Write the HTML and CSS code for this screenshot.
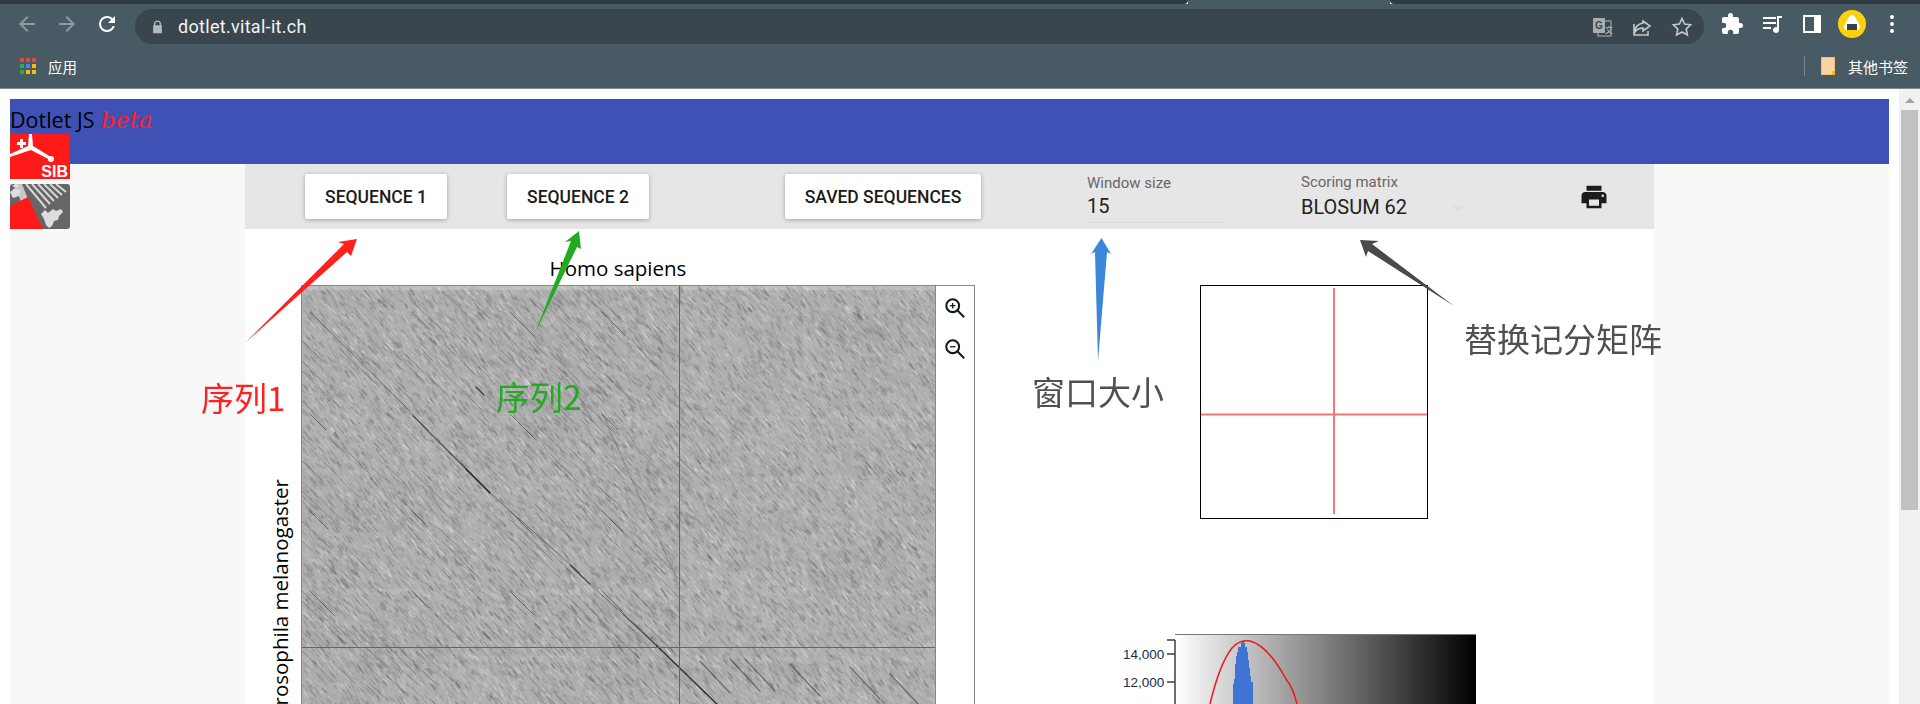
FILE: index.html
```html
<!DOCTYPE html>
<html lang="en">
  <head>
    <meta charset="UTF-8" />
    <title>Dotlet JS</title>
    <link rel="stylesheet" href="styles.css">
  </head>
  <body>
    <div class="browser">
      <div class="tabstrip">
        <div class="tab-dark"></div>
        <div class="tab-light"></div>
        <div class="tab-rest"></div>
      </div>
      <div class="toolbar">
        <svg class="tool dim" viewBox="0 0 24 24"><path d="M20 11H7.800l5.600-5.600L12 4l-8 8 8 8 1.400-1.400L7.800 13H20z"/></svg>
        <svg class="tool dim" viewBox="0 0 24 24"><path d="M4 11h12.200l-5.600-5.600L12 4l8 8-8 8-1.400-1.400 5.600-5.600H4z"/></svg>
        <svg class="tool" viewBox="0 0 24 24"><path d="M17.650 6.350A7.960 7.960 0 0 0 12 4a8 8 0 1 0 7.730 10h-2.080A6 6 0 1 1 12 6c1.660 0 3.140.69 4.220 1.780L13 11h7V4z"/></svg>
        <div class="omnibox">
          <svg class="lock" viewBox="0 0 12 16"><path d="M10 6V4.500a4 4 0 0 0-8 0V6H1v9h10V6zM3.500 6V4.500a2.500 2.500 0 0 1 5 0V6z"/></svg>
          <span class="url">dotlet.vital-it.ch</span>
          <svg class="tool omni-first" viewBox="0 0 24 24">
            <rect class="tr-back" x="8" y="6" width="13" height="15"/>
            <rect class="tr-front" x="3" y="3" width="12" height="15" rx="1"/>
            <text class="tr-g" x="5" y="14">G</text>
            <text class="tr-x" x="15" y="18">文</text>
          </svg>
          <svg class="tool line-icon" viewBox="0 0 24 24"><path d="M4 9v11h14v-4M13 6l7 5-7 5v-3c-4 0-6 1-8 4 0-5 3-8 8-9z"/></svg>
          <svg class="tool line-icon" viewBox="0 0 24 24"><path d="M12 3.500l2.600 5.600 6 .7-4.400 4.200 1.200 6L12 17l-5.400 3 1.200-6-4.400-4.200 6-.7z"/></svg>
        </div>
        <div class="tool-right">
          <svg class="tool white" viewBox="0 0 24 24"><path d="M20.500 11H19V7a2 2 0 0 0-2-2h-4V3.500a2.500 2.500 0 0 0-5 0V5H4a2 2 0 0 0-2 2v3.800h1.500a2.700 2.700 0 0 1 0 5.400H2V20a2 2 0 0 0 2 2h3.800v-1.500a2.700 2.700 0 0 1 5.400 0V22H17a2 2 0 0 0 2-2v-4h1.500a2.500 2.500 0 0 0 0-5z"/></svg>
          <svg class="tool white" viewBox="0 0 24 24"><path d="M3 5h13v2H3zM3 10h13v2H3zM3 15h8v2H3zM17 4h5v2h-3v12a3 3 0 1 1-2-2.800z"/></svg>
          <svg class="tool white" viewBox="0 0 24 24"><path d="M3 3h18v18H3zm2 2v14h9V5z"/></svg>
          <svg class="avatar" viewBox="0 0 28 28">
            <circle cx="14" cy="14" r="14" fill="#fdd00f"/>
            <path d="M14 5c2 0 3 1.500 4.500 4.500S22 15 22 17c0 2-1.500 3-3 3H9c-1.500 0-3-1-3-3 0-2 2-4.500 3.500-7.500S12 5 14 5z" fill="#fff"/>
            <rect x="9" y="14" width="10" height="6" fill="#36424a"/>
          </svg>
          <svg class="tool white" viewBox="0 0 24 24"><circle cx="12" cy="5" r="2"/><circle cx="12" cy="12" r="2"/><circle cx="12" cy="19" r="2"/></svg>
        </div>
      </div>
      <div class="bookmarks">
        <svg class="apps" viewBox="0 0 16 17">
          <rect width="4" height="4" fill="#e8453c"/><rect x="6" width="4" height="4" fill="#e8453c"/><rect x="12" width="4" height="4" fill="#e8453c"/>
          <rect y="6" width="4" height="4" fill="#34a853"/><rect x="6" y="6" width="4" height="4" fill="#4285f4"/><rect x="12" y="6" width="4" height="4" fill="#fbbc05"/>
          <rect y="12" width="4" height="4" fill="#34a853"/><rect x="6" y="12" width="4" height="4" fill="#fbbc05"/><rect x="12" y="12" width="4" height="4" fill="#fbbc05"/>
        </svg>
        <span class="bm-text">应用</span>
        <div class="bm-sep"></div>
        <svg class="folder" viewBox="0 0 14 18"><path d="M0 0h14v18H0z" fill="#fdd3a3"/><path d="M0 0h14v18H0z" fill="none" stroke="#e8b040" stroke-width="1"/><path d="M11 14h3v4h-3z" fill="#fbbc05"/></svg>
        <span class="bm-text other">其他书签</span>
      </div>
    </div>

    <div class="viewport">
      <div class="page">
        <div class="banner">
          <div class="brand">Dotlet JS <span class="beta">beta</span></div>
          <svg class="logo" viewBox="0 0 60 45">
            <rect width="60" height="45" fill="#ff1a1a"/>
            <path d="M0 20L18 12 19 0h3l1 12 18 11-1 3-19-10L0 23z" fill="#fff"/>
            <circle cx="41" cy="25" r="3" fill="#fff"/>
            <path d="M10 5h3v3h3v3h-3v3h-3v-3H7V8h3z" fill="#fff"/>
            <text class="sib" x="58" y="43">SIB</text>
          </svg>
          <svg class="logo" viewBox="0 0 60 45">
            <rect width="60" height="45" rx="3" fill="#666"/>
            <path d="M12 0l18 45h-8L4 0z" fill="#c8c8c8"/>
            <path class="stripes" d="M16 0l20 24M22 0l18 20M28 0l16 17M34 0l14 14M40 0l12 11M46 0l10 8"/>
            <path d="M0 22L18 13 33 45H0z" fill="#ff1a1a"/>
            <path d="M0 8l5-4 6 3-2 5-6 2zM2 2l4-2 3 2-3 2z" fill="#ddd"/>
            <path d="M31 30l4-4 3 3 5-4 3 2 5-2 2 3-4 4-1 4-4 1-2 5-3 2-3-3-2-6z" fill="#ddd"/>
          </svg>
        </div>

        <div class="content">
          <div class="app">
            <div class="app-bar">
              <button class="btn">SEQUENCE 1</button>
              <button class="btn btn-second">SEQUENCE 2</button>
              <button class="btn btn-saved">SAVED SEQUENCES</button>
              <div class="field field-window">
                <span class="field-label">Window size</span>
                <span class="field-value">15</span>
              </div>
              <div class="field field-matrix">
                <span class="field-label">Scoring matrix</span>
                <span class="field-value">BLOSUM 62</span>
                <span class="caret"></span>
              </div>
              <svg class="printer" viewBox="0 0 24 24"><path d="M19 8H5c-1.660 0-3 1.340-3 3v6h4v4h12v-4h4v-6c0-1.660-1.340-3-3-3zm-3 11H8v-5h8v5zm3-7c-.55 0-1-.45-1-1s.45-1 1-1 1 .45 1 1-.45 1-1 1zm-1-9H6v4h12V3z"/></svg>
            </div>

            <div class="workspace">
              <div class="y-label">Drosophila melanogaster</div>
              <div class="plot-col">
                <div class="x-label">Homo sapiens</div>
                <div class="plot-box">
                  <canvas id="dotplot" width="633" height="634"></canvas>
                  <div class="zoom-tools">
                    <svg class="zoom-icon" viewBox="0 0 24 24"><circle cx="9.500" cy="9.500" r="7" /><path d="M14.500 14.500L22 22"/><path class="thin" d="M9.500 6.500v6M6.500 9.500h6"/></svg>
                    <svg class="zoom-icon" viewBox="0 0 24 24"><circle cx="9.500" cy="9.500" r="7" /><path d="M14.500 14.500L22 22"/><path class="thin" d="M6.500 9.500h6"/></svg>
                  </div>
                </div>
              </div>
              <div class="side-col">
                <svg class="matrix-box" viewBox="0 0 228 234">
                  <rect x=".5" y=".5" width="227" height="233" fill="#fff" stroke="#000"/>
                  <path d="M134 3v226M1 129.500h226" stroke="#f0767c" stroke-width="2" fill="none"/>
                </svg>
                <svg class="hist" viewBox="0 0 360 70">
                  <defs>
                    <linearGradient id="grey">
                      <stop offset="0" stop-color="#fff"/>
                      <stop offset=".5" stop-color="#808080"/>
                      <stop offset="1" stop-color="#000"/>
                    </linearGradient>
                  </defs>
                  <rect x="55" y="0" width="301" height="70" fill="url(#grey)"/>
                  <path d="M55 .5h301" stroke="#777" fill="none"/>
                  <path d="M55 6v64M47 6h8M47 20h8M47 48h8" stroke="#36424a" stroke-width="1.500" fill="none"/>
                  <path class="bars" d="M113 70V50h1v-5h1V30h1V22h1v-4h1V13h3V9h1v-2h2v2h1v4h2V18h1v8h1v8h1v8h1v6h2v22z"/>
                  <path class="curve" d="M90 70C96 45 104 24 112 14c6-7 12-8 18-7 12 3 25 18 36 38 6 8 8 14 11 25"/>
                  <text class="tick" x="3" y="25">14,000</text>
                  <text class="tick" x="3" y="53">12,000</text>
                </svg>
              </div>
            </div>
          </div>
        </div>

        <!-- notes drawn over the screenshot -->
        <svg class="note-arrows" viewBox="0 0 1920 614">
          <path fill="#ff2020" d="M245 254L344 155 338 153 357 150 351 167 347 163z"/>
          <path fill="#22aa22" d="M535 244L571 152 565 153 579 142 581 160 577 158z"/>
          <path fill="#3c86dc" d="M1098 272L1095 163 1091 165 1101.500 149 1111 165 1107 163z"/>
          <path fill="#4a4a4a" d="M1454 217L1372 155 1379 152 1360 151 1366 168 1368 162z"/>
        </svg>
        <span class="note note-red">序列1</span>
        <span class="note note-green">序列2</span>
        <span class="note note-grey note-window">窗口大小</span>
        <span class="note note-grey note-matrix">替换记分矩阵</span>
      </div>
      <div class="scrollbar">
        <span class="scroll-up"></span>
        <div class="scroll-thumb"></div>
      </div>
    </div>
    <script src="plot.js"></script>
  </body>
</html>
```

FILE: styles.css
```css
html, body {
  margin: 0;
  height: 704px;
  overflow: hidden;
  background: #fff;
}
svg {
  display: block;
  flex-shrink: 0;
}

/* browser frame */
.browser {
  font-family: Roboto, "Noto Sans CJK SC", sans-serif;
  color: #fff;
}
.tabstrip {
  display: flex;
  height: 4px;
}
.tab-dark {
  width: 1188px;
  background: #2f3b40;
  border-radius: 0 0 8px 0;
}
.tab-light {
  width: 202px;
  background: #485a63;
}
.tab-rest {
  flex: 1;
  background: #2f3b40;
  border-radius: 0 0 0 8px;
}
.toolbar {
  display: flex;
  align-items: center;
  height: 40px;
  padding-left: 15px;
  gap: 16px;
  background: #485a63;
}
.tool {
  width: 24px;
  height: 24px;
  fill: #fff;
}
.tool.dim {
  fill: #8f9ba1;
}
.tool.white {
  fill: #fff;
}
.line-icon {
  fill: none;
  stroke: #c4c9cc;
  stroke-width: 1.6;
}
.omnibox {
  display: flex;
  align-items: center;
  gap: 16px;
  width: 1569px;
  height: 35px;
  margin-top: 5px;
  box-sizing: border-box;
  padding: 0 10px 0 17px;
  background: #3a464d;
  border-radius: 18px;
}
.lock {
  width: 11px;
  height: 14px;
  fill: #b4b9bc;
}
.url {
  margin-left: -1px;
  font-size: 18px;
  letter-spacing: 0.3px;
  color: #f2f4f5;
}
.omni-first {
  margin-left: auto;
}
.tr-back {
  fill: #3a464d;
  stroke: #b4b9bc;
}
.tr-front {
  fill: #a8adb0;
}
.tr-g {
  font: bold 10px "Liberation Sans", sans-serif;
  fill: #3a464d;
}
.tr-x {
  font: 8px "Noto Sans CJK SC", sans-serif;
  fill: #c4c9cc;
}
.tool-right {
  display: flex;
  align-items: center;
  gap: 16px;
}
.avatar {
  width: 28px;
  height: 28px;
  margin: 0 -2px;
}
.bookmarks {
  display: flex;
  align-items: center;
  height: 45px;
  padding: 0 12px 0 20px;
  box-sizing: border-box;
  background: #485a63;
  border-bottom: 1px solid #7c8a91;
}
.apps {
  width: 16px;
  height: 17px;
  margin-right: 12px;
}
.bm-text {
  font-size: 14.500px;
}
.other {
  font-size: 15px;
}
.bm-sep {
  width: 1px;
  height: 20px;
  margin-left: auto;
  background: #77858c;
}
.folder {
  width: 14px;
  height: 18px;
  margin: 0 13px 0 16px;
}

/* page */
.viewport {
  display: flex;
  height: 615px;
  overflow: hidden;
}
.page {
  position: relative;
  flex-shrink: 0;
  width: 1889px;
  box-sizing: border-box;
  padding: 10px 0 0 10px;
  font-family: "Open Sans", "Noto Sans", sans-serif;
}
.banner {
  height: 65px;
  background: #3f51b5;
}
.brand {
  height: 35px;
  padding-top: 6px;
  box-sizing: border-box;
  font-size: 21.500px;
  line-height: 30px;
  color: #000;
}
.beta {
  margin-left: 1px;
  font-family: "DejaVu Serif", serif;
  font-style: italic;
  font-size: 23px;
  color: #ff2020;
}
.logo {
  width: 60px;
  height: 45px;
  margin-bottom: 5px;
}
.sib {
  font: bold 16px "Liberation Sans", sans-serif;
  fill: #fff;
  text-anchor: end;
}
.stripes {
  fill: none;
  stroke: #d8d8d8;
  stroke-width: 2;
}
.content {
  height: 540px;
  padding-left: 235px;
  background: #f8f8f8;
}
.app {
  width: 1409px;
  height: 540px;
  background: #fff;
}
.app-bar {
  display: flex;
  align-items: flex-start;
  height: 65px;
  padding: 10px 0 0 60px;
  box-sizing: border-box;
  background: #e6e6e6;
  font-family: Roboto, sans-serif;
}
.btn {
  width: 142px;
  height: 45px;
  padding: 1px 0 0;
  border: 0;
  border-radius: 2px;
  background: #fff;
  box-shadow: 0 1px 4px rgba(0, 0, 0, 0.3);
  font-family: Roboto, sans-serif;
  font-size: 17.500px;
  font-weight: 500;
  color: #1c1c1c;
}
.btn-second {
  margin-left: 60px;
}
.btn-saved {
  width: 196px;
  margin-left: 136px;
}
.field {
  position: relative;
  display: flex;
  flex-direction: column;
}
.field-label {
  font-size: 15px;
  line-height: 18px;
  color: #666;
}
.field-value {
  font-size: 20px;
  line-height: 24px;
  color: #222;
}
.field-window {
  width: 138px;
  height: 48px;
  margin-left: 106px;
  border-bottom: 1px solid #dcdcdc;
}
.field-window .field-label {
  margin-top: 0;
}
.field-window .field-value {
  margin-top: 2px;
}
.field-matrix {
  width: 170px;
  margin-left: 76px;
  margin-top: -1px;
}
.field-matrix .field-value {
  margin-top: 4px;
}
.caret {
  position: absolute;
  top: 33px;
  left: 151px;
  border: 6px solid transparent;
  border-top-color: #dedede;
  border-bottom: 0;
}
.printer {
  width: 30px;
  height: 30px;
  margin: 8px 0 0 108px;
  fill: #1c1c1c;
}
.workspace {
  display: flex;
  height: 475px;
  overflow: hidden;
  color: #000;
}
.y-label {
  align-self: flex-start;
  width: 24px;
  margin: 250px 0 0 23px;
  flex-shrink: 0;
  writing-mode: vertical-rl;
  transform: rotate(180deg);
  white-space: nowrap;
  font-size: 20.500px;
  line-height: 24px;
}
.plot-col {
  width: 674px;
  margin-left: 9px;
  flex-shrink: 0;
}
.x-label {
  width: 634px;
  height: 24px;
  margin: 27px 0 5px;
  text-align: center;
  font-size: 20.500px;
  line-height: 24px;
}
.plot-box {
  display: flex;
  width: 672px;
  height: 636px;
  border: 1px solid #888;
}
#dotplot {
  display: block;
  width: 633px;
  height: 634px;
  border-right: 1px solid #888;
}
.zoom-tools {
  display: flex;
  flex-direction: column;
  align-items: center;
  gap: 19px;
  flex: 1;
  padding-top: 11px;
}
.zoom-icon {
  width: 22px;
  height: 22px;
  fill: none;
  stroke: #101820;
  stroke-width: 2.200;
}
.zoom-icon .thin {
  stroke-width: 1.400;
}
.side-col {
  margin-left: 145px;
  padding-top: 56px;
}
.matrix-box {
  width: 228px;
  height: 234px;
  margin-left: 80px;
}
.hist {
  width: 360px;
  height: 70px;
  margin-top: 115px;
}
.bars {
  fill: #3f74d4;
}
.curve {
  fill: none;
  stroke: #f01818;
  stroke-width: 1.500;
}
.tick {
  font: 13.500px "Liberation Sans", sans-serif;
  fill: #1a2a50;
}

/* notes over the page */
.note-arrows {
  position: absolute;
  left: 0;
  top: 0;
  width: 1920px;
  height: 614px;
  pointer-events: none;
}
.note {
  position: absolute;
  font-family: "Noto Sans CJK SC", sans-serif;
  line-height: 44px;
  white-space: nowrap;
}
.note-red {
  left: 201px;
  top: 286px;
  font-size: 33px;
  color: #ff2020;
}
.note-green {
  left: 496px;
  top: 285px;
  font-size: 33.500px;
  color: #22aa22;
}
.note-grey {
  font-size: 33px;
  color: #505050;
}
.note-window {
  left: 1032px;
  top: 280px;
}
.note-matrix {
  left: 1464px;
  top: 227px;
}

.scrollbar {
  position: relative;
  width: 21px;
  margin-left: 10px;
  background: #f1f1f1;
}
.scroll-up {
  display: block;
  width: 0;
  margin: 9px auto 0;
  border: 5px solid transparent;
  border-bottom-color: #a3a3a3;
  border-top: 0;
}
.scroll-thumb {
  height: 400px;
  margin: 7px 2px 0;
  background: #c1c1c1;
}
```

FILE: plot.js
```js
// dotplot picture: grey noise, streaks along the diagonal, then the repeats
var canvas = document.getElementById("dotplot");
var ctx = canvas.getContext("2d");
var W = canvas.width;
var H = canvas.height;
var OX = 302;
var OY = 287;

var seed = 12345;
function rnd() {
  seed = (seed * 1664525 + 1013904223) % 4294967296;
  return seed / 4294967296;
}

function seg(x1, y1, x2, y2, alpha, width) {
  ctx.strokeStyle = "rgba(20,20,20," + alpha + ")";
  ctx.lineWidth = width;
  ctx.beginPath();
  ctx.moveTo(x1 - OX, y1 - OY);
  ctx.lineTo(x2 - OX, y2 - OY);
  ctx.stroke();
}

ctx.fillStyle = "#aeaeae";
ctx.fillRect(0, 0, W, H);

// soft blocks and bands
for (var i = 0; i < 120; i++) {
  var light = rnd() > 0.5;
  ctx.fillStyle = light ? "rgba(255,255,255,0.025)" : "rgba(0,0,0,0.015)";
  ctx.fillRect(rnd() * W, rnd() * H, 15 + rnd() * 70, 8 + rnd() * 50);
}
var rows = [130, 303, 370, 540];
for (var r = 0; r < rows.length; r++) {
  ctx.fillStyle = "rgba(255,255,255,0.05)";
  ctx.fillRect(0, rows[r], W, 6);
}
var cols = [211, 460, 500];
for (var c = 0; c < cols.length; c++) {
  ctx.fillStyle = "rgba(255,255,255,0.04)";
  ctx.fillRect(cols[c], 0, 6, H);
}
ctx.fillStyle = "rgba(255,255,255,0.2)";
ctx.fillRect(0, 0, W, 4);

// fine streaks
ctx.lineCap = "round";
for (var n = 0; n < 34000; n++) {
  var x = rnd() * W;
  var y = rnd() * H;
  var len = 2 + rnd() * 6;
  var v = rnd();
  var tone = v > 0.5 ? "255,255,255" : "60,60,60";
  ctx.strokeStyle = "rgba(" + tone + "," + (0.05 + rnd() * 0.15) + ")";
  ctx.lineWidth = 1 + rnd();
  ctx.beginPath();
  ctx.moveTo(x, y);
  ctx.lineTo(x + len * 0.64, y + len * 0.77);
  ctx.stroke();
}

// faint parallel lines in the left part
for (var d = -320; d < 380; d += 10) {
  var sx = 302;
  while (sx < 680) {
    var l = 8 + rnd() * 34;
    var sy = sx + d;
    if (rnd() > 0.5 && sy > 290) {
      seg(sx, sy, sx + l, sy + l * 0.97, 0.1 + rnd() * 0.2, 1);
    }
    sx += l + rnd() * 10;
  }
}

// soften everything drawn so far
ctx.filter = "blur(0.6px)";
ctx.drawImage(canvas, 0, 0);
ctx.filter = "none";

// main alignment
seg(310, 313, 410, 412, 0.4, 1);
seg(413, 417, 490, 494, 0.55, 1.1);
seg(466, 470, 490, 494, 0.8, 1.3);
seg(490, 494, 580, 574, 0.4, 1);
seg(570, 566, 590, 585, 0.7, 1.2);
seg(590, 585, 623, 615, 0.35, 1);
seg(623, 615, 657, 647, 0.6, 1.2);
seg(657, 647, 720, 708, 0.8, 1.4);

// repeats, roughly one block every hundred pixels
var xs = [310, 412, 510, 602];
var ys = [313, 415, 512, 592];
for (var a = 0; a < xs.length; a++) {
  for (var b = 0; b < ys.length; b++) {
    if (a === 0 && b === 0) continue;
    var l2 = 14 + rnd() * 12;
    seg(xs[a], ys[b], xs[a] + l2, ys[b] + l2, 0.45, 1);
    seg(xs[a] + l2 + 14, ys[b] + l2 + 14, xs[a] + l2 + 44, ys[b] + l2 + 44, 0.22, 1);
  }
}
seg(476, 388, 484, 396, 0.75, 1.4);
seg(598, 620, 640, 660, 0.4, 1);
seg(600, 410, 677, 580, 0.2, 1);

// lower right block
var lower = [[700, 662], [730, 660], [745, 660], [790, 665], [850, 668], [890, 675]];
for (var p = 0; p < lower.length; p++) {
  seg(lower[p][0], lower[p][1], lower[p][0] + 30, lower[p][1] + 32, 0.45, 1.1);
}

// crosshair
ctx.fillStyle = "#f42a20";
ctx.fillRect(679 - OX, 0, 1, H);
ctx.fillRect(0, 648 - OY, W, 1);
```
